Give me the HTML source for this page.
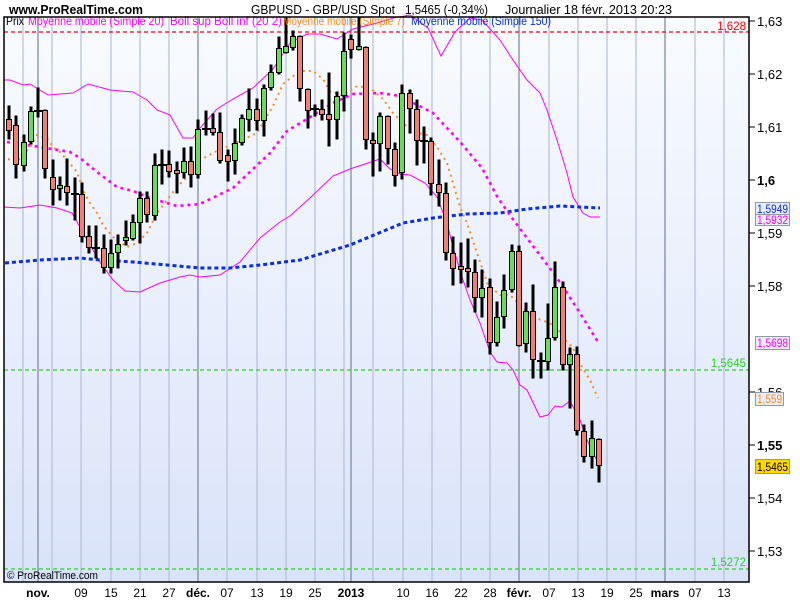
<!DOCTYPE html>
<html><head><meta charset="utf-8"><style>
html,body{margin:0;padding:0;background:#fff;}
svg{display:block;font-family:"Liberation Sans",sans-serif;}
</style></head><body>
<svg width="800" height="600" viewBox="0 0 800 600" xmlns="http://www.w3.org/2000/svg">
<defs>
<linearGradient id="bg" x1="0" y1="0" x2="0" y2="1">
<stop offset="0" stop-color="#f9fbff"/><stop offset="1" stop-color="#d9e3f9"/>
</linearGradient>
</defs>
<rect width="800" height="600" fill="#fff"/>
<text x="9" y="14" font-size="13" font-weight="bold" textLength="134" lengthAdjust="spacingAndGlyphs">www.ProRealTime.com</text>
<text x="251" y="14" font-size="13" textLength="144" lengthAdjust="spacingAndGlyphs">GBPUSD - GBP/USD Spot</text>
<text x="405" y="14" font-size="13" textLength="83" lengthAdjust="spacingAndGlyphs">1,5465 (-0,34%)</text>
<text x="505" y="14" font-size="13" textLength="167" lengthAdjust="spacingAndGlyphs">Journalier  18 févr. 2013 20:23</text>

<rect x="4" y="17" width="745" height="565" fill="url(#bg)"/>
<g stroke="#b4c0d8" stroke-width="1.2">
<line x1="23" y1="17" x2="23" y2="582"/><line x1="52" y1="17" x2="52" y2="582"/><line x1="81" y1="17" x2="81" y2="582"/><line x1="111" y1="17" x2="111" y2="582"/><line x1="140" y1="17" x2="140" y2="582"/><line x1="169" y1="17" x2="169" y2="582"/><line x1="227" y1="17" x2="227" y2="582"/><line x1="257" y1="17" x2="257" y2="582"/><line x1="286" y1="17" x2="286" y2="582"/><line x1="315" y1="17" x2="315" y2="582"/><line x1="344" y1="17" x2="344" y2="582"/><line x1="373" y1="17" x2="373" y2="582"/><line x1="403" y1="17" x2="403" y2="582"/><line x1="432" y1="17" x2="432" y2="582"/><line x1="461" y1="17" x2="461" y2="582"/><line x1="490" y1="17" x2="490" y2="582"/><line x1="549" y1="17" x2="549" y2="582"/><line x1="578" y1="17" x2="578" y2="582"/><line x1="607" y1="17" x2="607" y2="582"/><line x1="636" y1="17" x2="636" y2="582"/><line x1="695" y1="17" x2="695" y2="582"/><line x1="724" y1="17" x2="724" y2="582"/>
</g>
<g stroke="#7f8ca4" stroke-width="1.3">
<line x1="38" y1="17" x2="38" y2="582"/><line x1="198" y1="17" x2="198" y2="582"/><line x1="351" y1="17" x2="351" y2="582"/><line x1="519" y1="17" x2="519" y2="582"/><line x1="665" y1="17" x2="665" y2="582"/>
</g>

<line x1="4" y1="32" x2="749" y2="32" stroke="#f00" stroke-width="1.3" stroke-dasharray="4 3"/>
<line x1="4" y1="370" x2="749" y2="370" stroke="#3c3" stroke-width="1.2" stroke-dasharray="4 3"/>
<line x1="4" y1="569" x2="749" y2="569" stroke="#3c3" stroke-width="1.2" stroke-dasharray="4 3"/>

<g fill="none" stroke="#f0f" stroke-width="1">
<polyline points="4,80 10,80 23,85 30,84 48,95 73,93 88,84 110,90 133,92 147,100 157,110 170,115 183,138 193,138 200,128 217,109 233,99 253,88 273,69 290,43 307,34 320,34 337,39 353,29 377,23 393,18 410,15 428,28 441,56 455,32 470,18 482,20 500,40 513,60 527,80 540,93 547,110 557,140 567,173 573,197 583,213 590,217 600,217"/>
<polyline points="4,207 20,208 40,205 57,208 72,213 80,227 87,240 100,262 113,280 125,291 140,292 160,283 180,277 190,275 200,277 220,275 240,262 260,238 280,222 290,216 310,198 333,176 350,169 380,159 390,169 400,174 410,175 425,183 437,197 447,223 453,247 463,280 470,300 480,323 490,352 497,362 507,363 513,370 520,385 527,390 540,417 548,415 555,406 562,407 570,401 580,420 587,440 600,467"/>
</g>
<polyline fill="none" stroke="#0a2ee0" stroke-width="3" stroke-dasharray="4 3" points="5,263 40,260 80,258 100,260 133,262 167,265 200,268 230,268 260,265 300,260 350,245 403,223 433,218 467,214 500,213 527,209 560,206 600,208"/>
<polyline fill="none" stroke="#f0f" stroke-width="2.6" stroke-dasharray="3 4" points="7,142 40,147 70,152 80,158 97,172 117,187 133,191 150,198 177,206 200,204 233,188 253,169 270,153 287,131 307,119 333,103 353,94 380,93 400,96 433,113 461,143 482,168 498,198 515,222 533,246 555,275 563,287 580,313 598,342"/>
<polyline fill="none" stroke="#ff8a1e" stroke-width="2" stroke-dasharray="2 4" points="8,159 17,162 23,155 30,147 37,135 47,138 53,147 60,152 67,160 77,172 83,190 90,203 97,213 103,225 113,237 127,247 137,243 147,233 157,213 167,200 177,187 187,177 200,160 217,151 240,141 257,133 273,106 283,84 300,71 313,71 323,79 330,91 343,96 357,86 370,88 383,99 393,113 400,120 413,132 427,135 437,147 447,163 453,183 460,207 467,223 477,253 488,285 500,295 510,295 520,305 533,317 547,322 557,327 563,338 573,348 582,367 590,380 598,398"/>

<g stroke="#000" stroke-width="1">
<rect x="8" y="106" width="2" height="33" fill="#000"/><rect x="6.5" y="119.5" width="5" height="11" fill="#ef7f70"/>
<rect x="15" y="116" width="2" height="62" fill="#000"/><rect x="13.5" y="125.5" width="5" height="39" fill="#ef7f70"/>
<rect x="23" y="135" width="2" height="36" fill="#000"/><rect x="21.5" y="142.5" width="5" height="23" fill="#66dd55"/>
<rect x="30" y="107" width="2" height="37" fill="#000"/><rect x="28.5" y="111.5" width="5" height="30" fill="#66dd55"/>
<rect x="37" y="88" width="2" height="29" fill="#000"/><rect x="34.5" y="110.5" width="7" height="1" fill="#000"/>
<rect x="44" y="110" width="2" height="68" fill="#000"/><rect x="42.5" y="110.5" width="5" height="58" fill="#ef7f70"/>
<rect x="52" y="160" width="2" height="45" fill="#000"/><rect x="50.5" y="177.5" width="5" height="12" fill="#ef7f70"/>
<rect x="59" y="177" width="2" height="23" fill="#000"/><rect x="57.5" y="185.5" width="5" height="3" fill="#66dd55"/>
<rect x="66" y="159" width="2" height="46" fill="#000"/><rect x="64.5" y="186.5" width="5" height="6" fill="#ef7f70"/>
<rect x="74" y="178" width="2" height="42" fill="#000"/><rect x="71.5" y="193.5" width="7" height="1" fill="#000"/>
<rect x="81" y="183" width="2" height="59" fill="#000"/><rect x="79.5" y="194.5" width="5" height="42" fill="#ef7f70"/>
<rect x="88" y="226" width="2" height="27" fill="#000"/><rect x="86.5" y="236.5" width="5" height="11" fill="#ef7f70"/>
<rect x="95" y="226" width="2" height="32" fill="#000"/><rect x="92.5" y="247.5" width="7" height="1" fill="#000"/>
<rect x="103" y="235" width="2" height="38" fill="#000"/><rect x="101.5" y="248.5" width="5" height="19" fill="#ef7f70"/>
<rect x="110" y="240" width="2" height="33" fill="#000"/><rect x="108.5" y="253.5" width="5" height="14" fill="#66dd55"/>
<rect x="117" y="235" width="2" height="33" fill="#000"/><rect x="115.5" y="244.5" width="5" height="8" fill="#66dd55"/>
<rect x="125" y="221" width="2" height="24" fill="#000"/><rect x="123.5" y="237.5" width="5" height="3" fill="#66dd55"/>
<rect x="132" y="215" width="2" height="25" fill="#000"/><rect x="130.5" y="222.5" width="5" height="16" fill="#66dd55"/>
<rect x="139" y="192" width="2" height="51" fill="#000"/><rect x="137.5" y="198.5" width="5" height="24" fill="#66dd55"/>
<rect x="146" y="192" width="2" height="30" fill="#000"/><rect x="144.5" y="198.5" width="5" height="16" fill="#ef7f70"/>
<rect x="154" y="154" width="2" height="66" fill="#000"/><rect x="152.5" y="165.5" width="5" height="50" fill="#66dd55"/>
<rect x="161" y="150" width="2" height="34" fill="#000"/><rect x="158.5" y="164.5" width="7" height="1" fill="#000"/>
<rect x="168" y="151" width="2" height="26" fill="#000"/><rect x="166.5" y="164.5" width="5" height="7" fill="#ef7f70"/>
<rect x="176" y="162" width="2" height="31" fill="#000"/><rect x="174.5" y="170.5" width="5" height="3" fill="#ef7f70"/>
<rect x="183" y="148" width="2" height="30" fill="#000"/><rect x="181.5" y="161.5" width="5" height="11" fill="#66dd55"/>
<rect x="190" y="147" width="2" height="40" fill="#000"/><rect x="188.5" y="161.5" width="5" height="13" fill="#ef7f70"/>
<rect x="197" y="120" width="2" height="58" fill="#000"/><rect x="195.5" y="129.5" width="5" height="45" fill="#66dd55"/>
<rect x="205" y="111" width="2" height="24" fill="#000"/><rect x="202.5" y="128.5" width="7" height="1" fill="#000"/>
<rect x="212" y="114" width="2" height="21" fill="#000"/><rect x="210.5" y="128.5" width="5" height="4" fill="#ef7f70"/>
<rect x="219" y="113" width="2" height="50" fill="#000"/><rect x="217.5" y="132.5" width="5" height="28" fill="#ef7f70"/>
<rect x="227" y="150" width="2" height="31" fill="#000"/><rect x="225.5" y="155.5" width="5" height="6" fill="#ef7f70"/>
<rect x="234" y="129" width="2" height="45" fill="#000"/><rect x="232.5" y="143.5" width="5" height="17" fill="#66dd55"/>
<rect x="241" y="115" width="2" height="30" fill="#000"/><rect x="239.5" y="118.5" width="5" height="24" fill="#66dd55"/>
<rect x="248" y="89" width="2" height="42" fill="#000"/><rect x="246.5" y="109.5" width="5" height="10" fill="#66dd55"/>
<rect x="256" y="99" width="2" height="31" fill="#000"/><rect x="254.5" y="109.5" width="5" height="11" fill="#ef7f70"/>
<rect x="263" y="85" width="2" height="51" fill="#000"/><rect x="261.5" y="88.5" width="5" height="32" fill="#66dd55"/>
<rect x="270" y="65" width="2" height="25" fill="#000"/><rect x="268.5" y="72.5" width="5" height="15" fill="#66dd55"/>
<rect x="278" y="37" width="2" height="37" fill="#000"/><rect x="276.5" y="48.5" width="5" height="24" fill="#66dd55"/>
<rect x="285" y="17" width="2" height="36" fill="#000"/><rect x="283.5" y="46.5" width="5" height="6" fill="#66dd55"/>
<rect x="292" y="31" width="2" height="19" fill="#000"/><rect x="290.5" y="36.5" width="5" height="11" fill="#66dd55"/>
<rect x="299" y="36" width="2" height="65" fill="#000"/><rect x="297.5" y="36.5" width="5" height="52" fill="#ef7f70"/>
<rect x="307" y="89" width="2" height="39" fill="#000"/><rect x="305.5" y="89.5" width="5" height="21" fill="#ef7f70"/>
<rect x="314" y="105" width="2" height="11" fill="#000"/><rect x="311.5" y="108.5" width="7" height="1" fill="#000"/>
<rect x="321" y="100" width="2" height="20" fill="#000"/><rect x="319.5" y="109.5" width="5" height="5" fill="#ef7f70"/>
<rect x="328" y="73" width="2" height="73" fill="#000"/><rect x="326.5" y="114.5" width="5" height="5" fill="#ef7f70"/>
<rect x="336" y="92" width="2" height="47" fill="#000"/><rect x="334.5" y="96.5" width="5" height="23" fill="#66dd55"/>
<rect x="343" y="33" width="2" height="78" fill="#000"/><rect x="341.5" y="51.5" width="5" height="44" fill="#66dd55"/>
<rect x="350" y="35" width="2" height="23" fill="#000"/><rect x="348.5" y="39.5" width="5" height="10" fill="#ef7f70"/>
<rect x="358" y="17" width="2" height="33" fill="#000"/><rect x="356.5" y="46.5" width="5" height="3" fill="#66dd55"/>
<rect x="365" y="47" width="2" height="102" fill="#000"/><rect x="363.5" y="47.5" width="5" height="92" fill="#ef7f70"/>
<rect x="372" y="133" width="2" height="43" fill="#000"/><rect x="370.5" y="140.5" width="5" height="3" fill="#ef7f70"/>
<rect x="379" y="113" width="2" height="58" fill="#000"/><rect x="377.5" y="116.5" width="5" height="27" fill="#66dd55"/>
<rect x="387" y="116" width="2" height="48" fill="#000"/><rect x="385.5" y="116.5" width="5" height="32" fill="#ef7f70"/>
<rect x="394" y="143" width="2" height="43" fill="#000"/><rect x="392.5" y="149.5" width="5" height="26" fill="#ef7f70"/>
<rect x="401" y="85" width="2" height="94" fill="#000"/><rect x="399.5" y="93.5" width="5" height="79" fill="#66dd55"/>
<rect x="409" y="90" width="2" height="43" fill="#000"/><rect x="407.5" y="93.5" width="5" height="15" fill="#ef7f70"/>
<rect x="416" y="100" width="2" height="65" fill="#000"/><rect x="414.5" y="109.5" width="5" height="31" fill="#ef7f70"/>
<rect x="423" y="127" width="2" height="36" fill="#000"/><rect x="420.5" y="140.5" width="7" height="1" fill="#000"/>
<rect x="430" y="138" width="2" height="57" fill="#000"/><rect x="428.5" y="141.5" width="5" height="42" fill="#ef7f70"/>
<rect x="438" y="160" width="2" height="46" fill="#000"/><rect x="436.5" y="184.5" width="5" height="8" fill="#ef7f70"/>
<rect x="445" y="183" width="2" height="77" fill="#000"/><rect x="443.5" y="193.5" width="5" height="59" fill="#ef7f70"/>
<rect x="452" y="237" width="2" height="48" fill="#000"/><rect x="450.5" y="253.5" width="5" height="15" fill="#ef7f70"/>
<rect x="460" y="243" width="2" height="40" fill="#000"/><rect x="458.5" y="266.5" width="5" height="3" fill="#ef7f70"/>
<rect x="467" y="239" width="2" height="48" fill="#000"/><rect x="465.5" y="268.5" width="5" height="3" fill="#ef7f70"/>
<rect x="474" y="260" width="2" height="52" fill="#000"/><rect x="472.5" y="272.5" width="5" height="25" fill="#ef7f70"/>
<rect x="481" y="270" width="2" height="47" fill="#000"/><rect x="479.5" y="288.5" width="5" height="9" fill="#66dd55"/>
<rect x="489" y="279" width="2" height="75" fill="#000"/><rect x="487.5" y="287.5" width="5" height="55" fill="#ef7f70"/>
<rect x="496" y="302" width="2" height="44" fill="#000"/><rect x="494.5" y="317.5" width="5" height="25" fill="#66dd55"/>
<rect x="503" y="275" width="2" height="53" fill="#000"/><rect x="501.5" y="290.5" width="5" height="26" fill="#66dd55"/>
<rect x="511" y="245" width="2" height="47" fill="#000"/><rect x="509.5" y="251.5" width="5" height="38" fill="#66dd55"/>
<rect x="518" y="246" width="2" height="100" fill="#000"/><rect x="516.5" y="251.5" width="5" height="94" fill="#ef7f70"/>
<rect x="525" y="303" width="2" height="49" fill="#000"/><rect x="523.5" y="311.5" width="5" height="32" fill="#66dd55"/>
<rect x="532" y="285" width="2" height="93" fill="#000"/><rect x="530.5" y="311.5" width="5" height="48" fill="#ef7f70"/>
<rect x="540" y="353" width="2" height="25" fill="#000"/><rect x="537.5" y="360.5" width="7" height="1" fill="#000"/>
<rect x="547" y="304" width="2" height="66" fill="#000"/><rect x="545.5" y="338.5" width="5" height="23" fill="#66dd55"/>
<rect x="554" y="262" width="2" height="78" fill="#000"/><rect x="552.5" y="287.5" width="5" height="50" fill="#66dd55"/>
<rect x="562" y="282" width="2" height="88" fill="#000"/><rect x="560.5" y="287.5" width="5" height="77" fill="#ef7f70"/>
<rect x="569" y="348" width="2" height="60" fill="#000"/><rect x="567.5" y="354.5" width="5" height="10" fill="#66dd55"/>
<rect x="576" y="347" width="2" height="88" fill="#000"/><rect x="574.5" y="354.5" width="5" height="76" fill="#ef7f70"/>
<rect x="583" y="425" width="2" height="37" fill="#000"/><rect x="581.5" y="431.5" width="5" height="25" fill="#ef7f70"/>
<rect x="591" y="421" width="2" height="47" fill="#000"/><rect x="589.5" y="438.5" width="5" height="18" fill="#66dd55"/>
<rect x="598" y="439" width="2" height="43" fill="#000"/><rect x="596.5" y="439.5" width="5" height="26" fill="#ef7f70"/>
</g>

<g font-size="11.5">
<text x="6" y="25" fill="#000" textLength="18" lengthAdjust="spacingAndGlyphs">Prix</text>
<text x="28" y="25" fill="#f0f" textLength="136" lengthAdjust="spacingAndGlyphs">Moyenne mobile (Simple 20)</text>
<text x="170" y="25" fill="#f0f" textLength="112" lengthAdjust="spacingAndGlyphs">Boll sup Boll inf (20 2)</text>
<text x="283" y="25" fill="#ff8a1e" textLength="122" lengthAdjust="spacingAndGlyphs">Moyenne mobile (Simple 7)</text>
<text x="411" y="25" fill="#0a2ee0" textLength="140" lengthAdjust="spacingAndGlyphs">Moyenne mobile (Simple 150)</text>
<text x="746" y="30" fill="#f00" text-anchor="end">1,628</text>
<text x="746" y="367" fill="#3c3" text-anchor="end">1,5645</text>
<text x="746" y="566" fill="#3c3" text-anchor="end">1,5272</text>
<text x="7" y="579" fill="#000" font-size="11" textLength="91" lengthAdjust="spacingAndGlyphs">© ProRealTime.com</text>
</g>

<rect x="4" y="17" width="745" height="565" fill="none" stroke="#000" stroke-width="1.5"/>

<g stroke="#000" stroke-width="1">
<line x1="749" y1="21" x2="755" y2="21"/><line x1="749" y1="74" x2="755" y2="74"/><line x1="749" y1="127" x2="755" y2="127"/><line x1="749" y1="180" x2="755" y2="180"/><line x1="749" y1="233" x2="755" y2="233"/><line x1="749" y1="286" x2="755" y2="286"/><line x1="749" y1="392" x2="755" y2="392"/><line x1="749" y1="445" x2="755" y2="445"/><line x1="749" y1="498" x2="755" y2="498"/><line x1="749" y1="551" x2="755" y2="551"/>
</g>
<g font-size="13">
<text x="757" y="26">1,63</text>
<text x="757" y="79">1,62</text>
<text x="757" y="132">1,61</text>
<text x="757" y="185" font-weight="bold">1,6</text>
<text x="757" y="238">1,59</text>
<text x="757" y="291">1,58</text>
<text x="757" y="397">1,56</text>
<text x="757" y="450" font-weight="bold">1,55</text>
<text x="757" y="503">1,54</text>
<text x="757" y="556">1,53</text>
</g>
<g font-size="11.5">
<rect x="755.5" y="213.5" width="34" height="12" fill="#e8eef8" stroke="#8d9aa8"/>
<text x="757" y="224" fill="#f0f" textLength="31" lengthAdjust="spacingAndGlyphs">1,5932</text>
<rect x="755.5" y="202.5" width="34" height="12" fill="#e8eef8" stroke="#8d9aa8"/>
<text x="757" y="213" fill="#0a2ee0" textLength="31" lengthAdjust="spacingAndGlyphs">1,5949</text>
<rect x="755.5" y="336.5" width="34" height="13" fill="#e8eef8" stroke="#8d9aa8"/>
<text x="757" y="347" fill="#f0f" textLength="31" lengthAdjust="spacingAndGlyphs">1,5698</text>
<rect x="755.5" y="392.5" width="28" height="13" fill="#e8eef8" stroke="#8d9aa8"/>
<text x="757" y="403" fill="#ff8a1e" textLength="25" lengthAdjust="spacingAndGlyphs">1,559</text>
<rect x="755.5" y="459.5" width="34" height="14" fill="#ffd800" stroke="#8d9aa8"/>
<text x="757" y="471" fill="#000" textLength="31" lengthAdjust="spacingAndGlyphs">1,5465</text>
</g>

<g font-size="12" text-anchor="middle">
<text x="38" y="597" font-weight="bold">nov.</text>
<text x="81" y="597">09</text><text x="111" y="597">15</text><text x="140" y="597">21</text><text x="169" y="597">27</text>
<text x="198" y="597" font-weight="bold">déc.</text>
<text x="227" y="597">07</text><text x="257" y="597">13</text><text x="286" y="597">19</text><text x="315" y="597">25</text>
<text x="351" y="597" font-weight="bold">2013</text>
<text x="403" y="597">10</text><text x="432" y="597">16</text><text x="461" y="597">22</text><text x="490" y="597">28</text>
<text x="519" y="597" font-weight="bold">févr.</text>
<text x="549" y="597">07</text><text x="578" y="597">13</text><text x="607" y="597">19</text><text x="636" y="597">25</text>
<text x="665" y="597" font-weight="bold">mars</text>
<text x="695" y="597">07</text><text x="724" y="597">13</text>
</g>
</svg>
</body></html>
